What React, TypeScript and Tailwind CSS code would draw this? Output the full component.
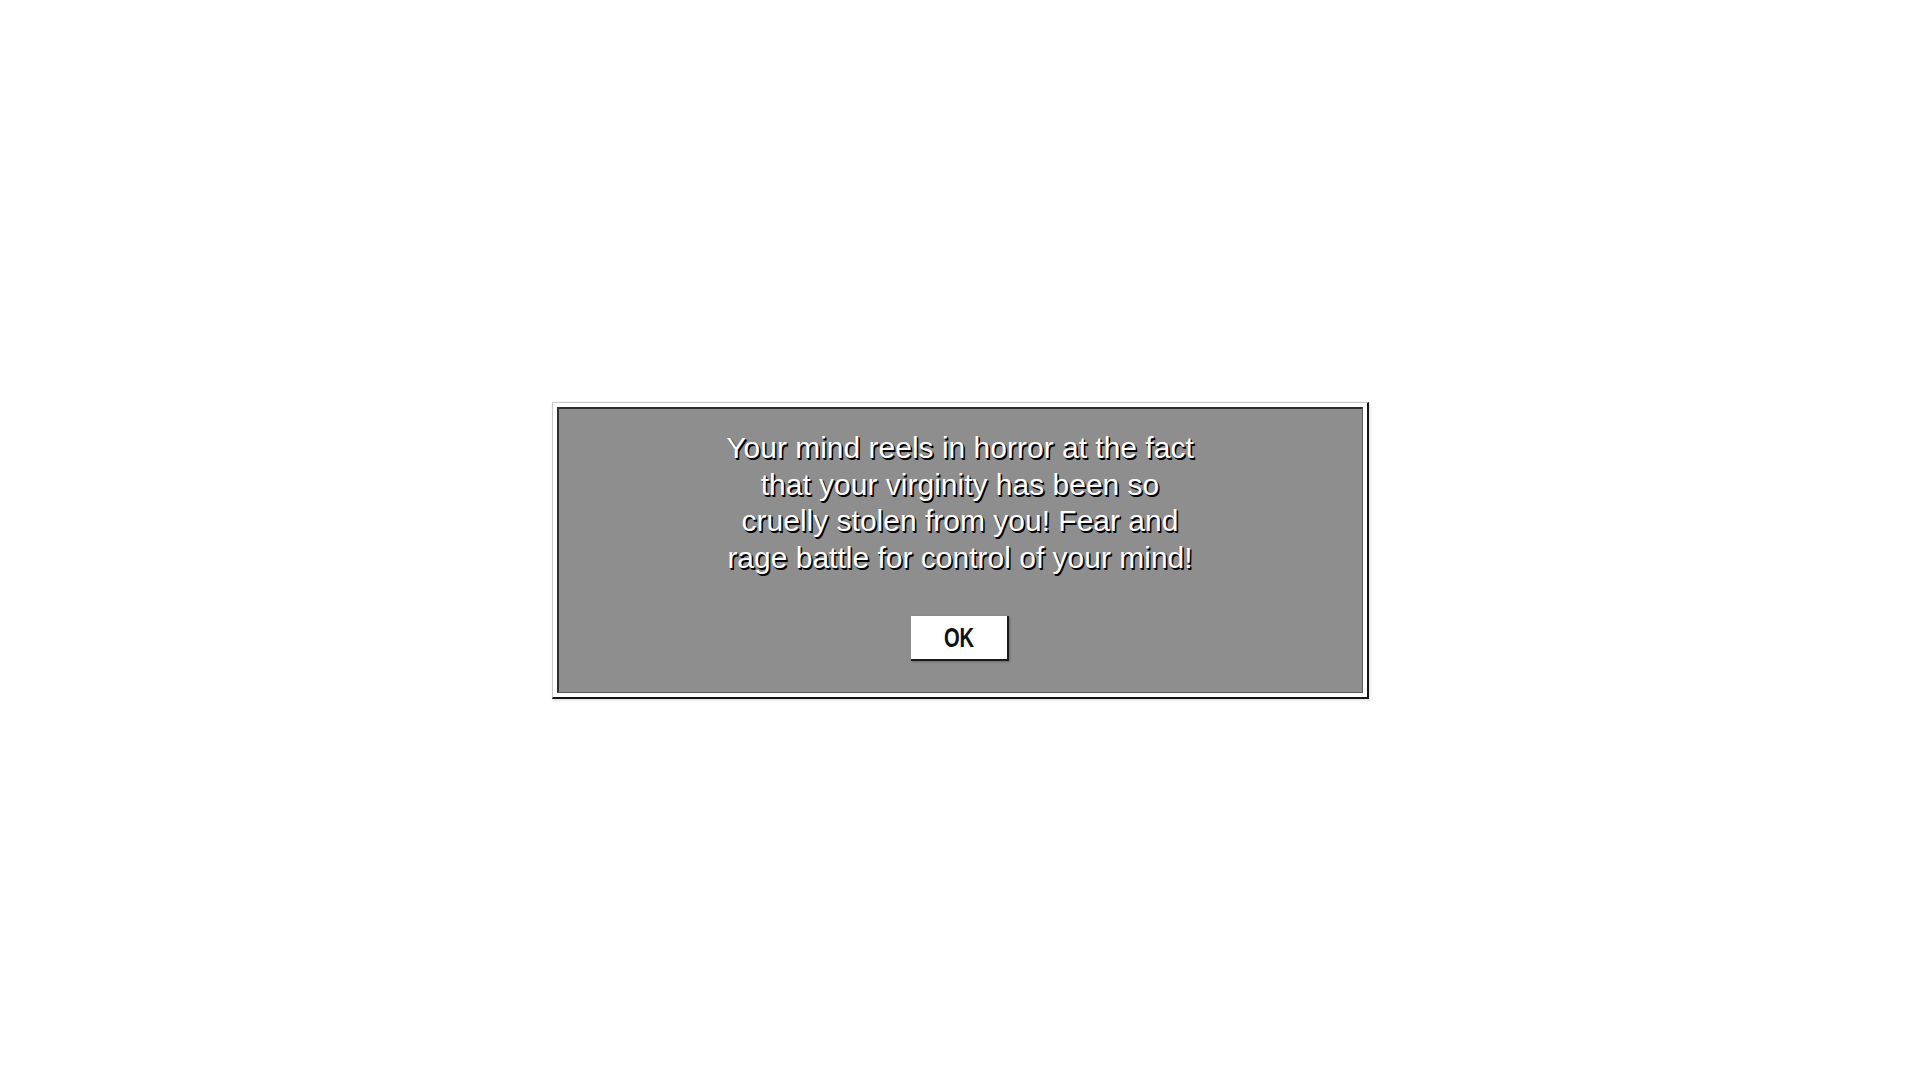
export default function App() {
  return (
    <div className="flex h-[1080px] w-[1920px] items-start justify-center bg-white pt-[402px]">
      <div className="w-[817px] border-t border-l border-t-[#c8c8c8] border-l-[#c8c8c8] border-r-2 border-b-2 border-r-[#151515] border-b-[#151515] bg-white p-[4px] shadow-[1px_1px_3px_rgba(0,0,0,0.15)]">
        <div className="flex h-[286px] flex-col items-center border-t-2 border-l-2 border-t-[#2e2e2e] border-l-[#2e2e2e] border-r border-b border-r-[#5a5a5a] border-b-[#5a5a5a] bg-[#8e8e8e] pt-[21px]">
          <p className="text-center font-['Liberation_Sans',Arial,sans-serif] text-[30px] leading-[36.7px] text-white [text-shadow:1.5px_1.5px_0.5px_#000,1px_1px_1px_#000]">
            Your mind reels in horror at the fact
            <br />
            that your virginity has been so
            <br />
            cruelly stolen from you! Fear and
            <br />
            rage battle for control of your mind!
          </p>
          <button
            type="button"
            className="mt-[39px] flex h-[45px] w-[98px] items-center justify-center border-r-2 border-b-2 border-r-[#1a1a1a] border-b-[#1a1a1a] bg-white pt-[2px] shadow-[1px_1px_2px_rgba(0,0,0,0.25)]"
          >
            <span className="inline-block origin-center scale-x-[0.72] font-['Liberation_Sans',Arial,sans-serif] text-[28px] font-bold leading-none text-[#111]">
              OK
            </span>
          </button>
        </div>
      </div>
    </div>
  );
}
